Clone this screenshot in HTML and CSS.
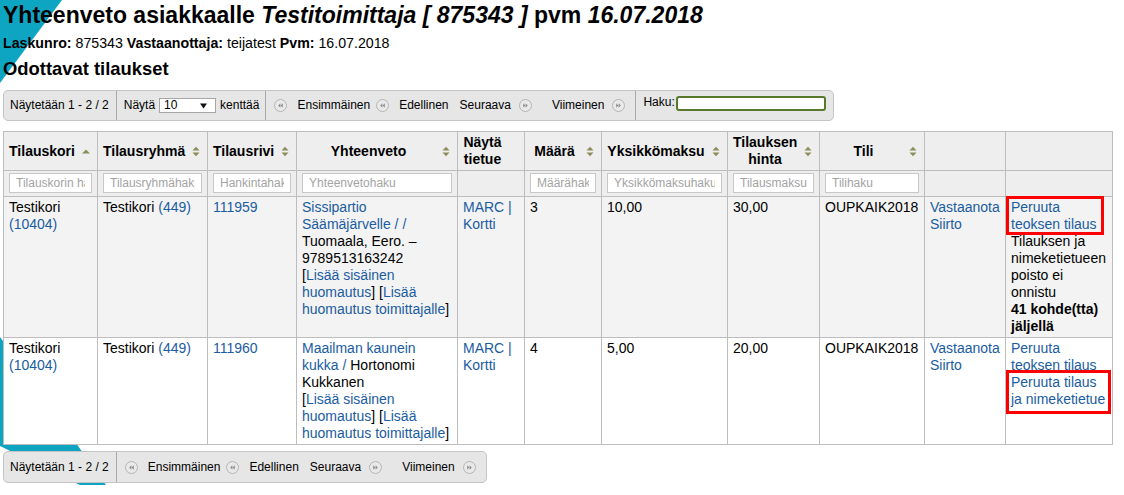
FILE: index.html
```html
<!DOCTYPE html>
<html lang="fi">
<head>
<meta charset="utf-8">
<title>Yhteenveto asiakkaalle Testitoimittaja</title>
<link rel="stylesheet" href="styles.css">
</head>
<body>
<svg class="backdrop" width="1124" height="495" viewBox="0 0 1124 495" aria-hidden="true">
  <polygon points="0,0 62,0 0,83"/>
  <polygon points="0,337 106,485 80,485 0,446"/>
</svg>

<h1>Yhteenveto asiakkaalle <i>Testitoimittaja [ 875343 ]</i> pvm <i>16.07.2018</i></h1>
<p class="meta"><b>Laskunro:</b> 875343 <b>Vastaanottaja:</b> teijatest <b>Pvm:</b> 16.07.2018</p>
<h2>Odottavat tilaukset</h2>

<div class="toolbar">
  <div class="seg info">Näytetään 1 - 2 / 2</div>
  <div class="seg length">
    <span>Näytä</span>
    <span class="sel">
      <select><option>10</option><option>20</option><option>50</option></select>
      <svg class="caret" width="7" height="6" viewBox="0 0 7 6"><path d="M0 0.5H7L3.5 5.5Z"/></svg>
    </span>
    <span>kenttää</span>
  </div>
  <div class="seg pager">
    <span class="pg first"><svg class="pgi" width="13" height="13" viewBox="0 0 13 13"><circle cx="6.5" cy="6.5" r="6"/><path d="M6.4 4.3L4.2 6.5L6.4 8.7Z M8.8 4.3L6.6 6.5L8.8 8.7Z"/></svg><span>Ensimmäinen</span></span>
    <span class="pg prev"><svg class="pgi" width="13" height="13" viewBox="0 0 13 13"><circle cx="6.5" cy="6.5" r="6"/><path d="M6.4 4.3L4.2 6.5L6.4 8.7Z M8.8 4.3L6.6 6.5L8.8 8.7Z"/></svg><span>Edellinen</span></span>
    <span class="pg next"><span>Seuraava</span><svg class="pgi" width="13" height="13" viewBox="0 0 13 13"><circle cx="6.5" cy="6.5" r="6"/><path d="M4.2 4.3L6.4 6.5L4.2 8.7Z M6.6 4.3L8.8 6.5L6.6 8.7Z"/></svg></span>
    <span class="pg last"><span>Viimeinen</span><svg class="pgi" width="13" height="13" viewBox="0 0 13 13"><circle cx="6.5" cy="6.5" r="6"/><path d="M4.2 4.3L6.4 6.5L4.2 8.7Z M6.6 4.3L8.8 6.5L6.6 8.7Z"/></svg></span>
  </div>
  <div class="seg search"><label><span>Haku:</span><input type="text"></label></div>
</div>

<table class="orders">
  <colgroup>
    <col class="c1"><col class="c2"><col class="c3"><col class="c4"><col class="c5"><col class="c6">
    <col class="c7"><col class="c8"><col class="c9"><col class="c10"><col class="c11">
  </colgroup>
  <thead>
    <tr class="heads">
      <th><span>Tilauskori</span><svg class="sort" width="8" height="11" viewBox="0 0 8 11"><path d="M0 7.5L4 3.5L8 7.5Z"/></svg></th>
      <th><span>Tilausryhmä</span><svg class="sort" width="8" height="11" viewBox="0 0 8 11"><path d="M0.5 4.5L4 0.8L7.5 4.5Z M0.5 6.5H7.5L4 10.2Z"/></svg></th>
      <th><span>Tilausrivi</span><svg class="sort" width="8" height="11" viewBox="0 0 8 11"><path d="M0.5 4.5L4 0.8L7.5 4.5Z M0.5 6.5H7.5L4 10.2Z"/></svg></th>
      <th><span>Yhteenveto</span><svg class="sort" width="8" height="11" viewBox="0 0 8 11"><path d="M0.5 4.5L4 0.8L7.5 4.5Z M0.5 6.5H7.5L4 10.2Z"/></svg></th>
      <th><span>Näytä tietue</span></th>
      <th><span>Määrä</span><svg class="sort" width="8" height="11" viewBox="0 0 8 11"><path d="M0.5 4.5L4 0.8L7.5 4.5Z M0.5 6.5H7.5L4 10.2Z"/></svg></th>
      <th><span>Yksikkömaksu</span><svg class="sort" width="8" height="11" viewBox="0 0 8 11"><path d="M0.5 4.5L4 0.8L7.5 4.5Z M0.5 6.5H7.5L4 10.2Z"/></svg></th>
      <th><span>Tilauksen hinta</span><svg class="sort" width="8" height="11" viewBox="0 0 8 11"><path d="M0.5 4.5L4 0.8L7.5 4.5Z M0.5 6.5H7.5L4 10.2Z"/></svg></th>
      <th><span>Tili</span><svg class="sort" width="8" height="11" viewBox="0 0 8 11"><path d="M0.5 4.5L4 0.8L7.5 4.5Z M0.5 6.5H7.5L4 10.2Z"/></svg></th>
      <th></th>
      <th></th>
    </tr>
    <tr class="filters">
      <td><input type="text" placeholder="Tilauskorin haku"></td>
      <td><input type="text" placeholder="Tilausryhmähaku"></td>
      <td><input type="text" placeholder="Hankintahaku"></td>
      <td><input type="text" placeholder="Yhteenvetohaku"></td>
      <td></td>
      <td><input type="text" placeholder="Määrähaku"></td>
      <td><input type="text" placeholder="Yksikkömaksuhaku"></td>
      <td><input type="text" placeholder="Tilausmaksuhaku"></td>
      <td><input type="text" placeholder="Tilihaku"></td>
      <td></td>
      <td></td>
    </tr>
  </thead>
  <tbody>
    <tr class="odd">
      <td>Testikori <a href="#">(10404)</a></td>
      <td>Testikori <a href="#">(449)</a></td>
      <td><a href="#">111959</a></td>
      <td><a href="#">Sissipartio Säämäjärvelle / /</a> Tuomaala, Eero. – 9789513163242<br>[<a href="#">Lisää sisäinen huomautus</a>] [<a href="#">Lisää huomautus toimittajalle</a>]</td>
      <td><a href="#">MARC |</a> <a href="#">Kortti</a></td>
      <td>3</td>
      <td>10,00</td>
      <td>30,00</td>
      <td>OUPKAIK2018</td>
      <td><a href="#">Vastaanota</a><br><a href="#">Siirto</a></td>
      <td>
        <div class="flag f1"><a href="#">Peruuta<br>teoksen tilaus</a></div>
        <div>Tilauksen ja nimeketietueen poisto ei onnistu</div>
        <div><b>41 kohde(tta) jäljellä</b></div>
      </td>
    </tr>
    <tr class="even">
      <td>Testikori <a href="#">(10404)</a></td>
      <td>Testikori <a href="#">(449)</a></td>
      <td><a href="#">111960</a></td>
      <td><a href="#">Maailman kaunein kukka /</a> Hortonomi Kukkanen<br>[<a href="#">Lisää sisäinen huomautus</a>] [<a href="#">Lisää huomautus toimittajalle</a>]</td>
      <td><a href="#">MARC |</a> <a href="#">Kortti</a></td>
      <td>4</td>
      <td>5,00</td>
      <td>20,00</td>
      <td>OUPKAIK2018</td>
      <td><a href="#">Vastaanota</a><br><a href="#">Siirto</a></td>
      <td>
        <a href="#">Peruuta teoksen tilaus</a>
        <div class="flag f2"><a href="#">Peruuta tilaus<br>ja nimeketietue</a></div>
      </td>
    </tr>
  </tbody>
</table>

<div class="toolbar bottom">
  <div class="seg info">Näytetään 1 - 2 / 2</div>
  <div class="seg pager">
    <span class="pg first"><svg class="pgi" width="13" height="13" viewBox="0 0 13 13"><circle cx="6.5" cy="6.5" r="6"/><path d="M6.4 4.3L4.2 6.5L6.4 8.7Z M8.8 4.3L6.6 6.5L8.8 8.7Z"/></svg><span>Ensimmäinen</span></span>
    <span class="pg prev"><svg class="pgi" width="13" height="13" viewBox="0 0 13 13"><circle cx="6.5" cy="6.5" r="6"/><path d="M6.4 4.3L4.2 6.5L6.4 8.7Z M8.8 4.3L6.6 6.5L8.8 8.7Z"/></svg><span>Edellinen</span></span>
    <span class="pg next"><span>Seuraava</span><svg class="pgi" width="13" height="13" viewBox="0 0 13 13"><circle cx="6.5" cy="6.5" r="6"/><path d="M4.2 4.3L6.4 6.5L4.2 8.7Z M6.6 4.3L8.8 6.5L6.6 8.7Z"/></svg></span>
    <span class="pg last"><span>Viimeinen</span><svg class="pgi" width="13" height="13" viewBox="0 0 13 13"><circle cx="6.5" cy="6.5" r="6"/><path d="M4.2 4.3L6.4 6.5L4.2 8.7Z M6.6 4.3L8.8 6.5L6.6 8.7Z"/></svg></span>
  </div>
</div>
</body>
</html>
```

FILE: styles.css
```css
html {
  background: #fff;
}

body {
  margin: 0;
  padding: 1px 3px 0;
  font-family: "Liberation Sans", Arial, sans-serif;
  font-size: 14px;
  line-height: 17px;
  color: #000;
}

a {
  color: #1a5c9f;
  text-decoration: none;
}

.backdrop {
  position: absolute;
  top: 0;
  left: 0;
  z-index: -1;
  fill: #0ea5c3;
}

h1 {
  margin: 0;
  font-size: 23px;
  line-height: 28px;
  font-weight: bold;
}

.meta {
  margin: 6px 0 0;
  font-size: 14.2px;
}

h2 {
  margin: 6px 0 0;
  font-size: 18.4px;
  line-height: 22px;
  font-weight: bold;
}

/* ---------- toolbars ---------- */
.toolbar {
  display: flex;
  width: max-content;
  height: 31px;
  box-sizing: border-box;
  margin-top: 10px;
  background: #e6e6e6;
  border: 1px solid #c4c4c4;
  border-radius: 5px;
  font-size: 12px;
  line-height: 15px;
}

.toolbar.bottom {
  margin-top: 6px;
  height: 32px;
}

.seg {
  display: flex;
  align-items: center;
  border-left: 1px solid #a9a9a9;
}

.seg:first-child {
  border-left: 0;
}

.info {
  padding: 0 7px 0 6px;
}

.length {
  padding: 0 6px 0 7px;
  gap: 4px;
}

.sel {
  position: relative;
  display: block;
}

.sel select {
  -webkit-appearance: none;
  appearance: none;
  display: block;
  width: 57px;
  height: 15px;
  box-sizing: border-box;
  margin: 0;
  padding: 0 0 0 4px;
  border: 1px solid #a6a6a6;
  border-radius: 0;
  background: #fff;
  color: #000;
  font-family: "Liberation Sans", Arial, sans-serif;
  font-size: 12px;
  line-height: 13px;
}

.caret {
  position: absolute;
  right: 9px;
  top: 5px;
  fill: #111;
}

.pager {
  padding: 0 10px 0 8px;
}

.pg {
  display: flex;
  align-items: center;
  gap: 10px;
}

.pg.next,
.pg.last {
  gap: 8px;
}

.pg.prev {
  margin-left: 6px;
}

.pg.next {
  margin-left: 11px;
}

.pg.last {
  margin-left: 20px;
}

.pgi circle {
  fill: #e9e9e9;
  stroke: #b4b4b4;
  stroke-width: 1;
}

.pgi path {
  fill: #8e8e8e;
}

.search {
  align-items: flex-start;
  padding: 5px 7px 0 7px;
}

.search label {
  display: flex;
  align-items: flex-start;
  line-height: 13px;
}

.search input {
  width: 150px;
  height: 15px;
  box-sizing: border-box;
  margin: 0 0 0 1px;
  padding: 0 3px;
  border: 2px solid #58782c;
  border-radius: 3px;
  background: #fff;
  font-size: 12px;
}

/* ---------- table ---------- */
.orders {
  margin-top: 10px;
  border-collapse: collapse;
  table-layout: fixed;
  width: 1109px;
}

.c1 { width: 94px; }
.c2 { width: 110px; }
.c3 { width: 89px; }
.c4 { width: 161px; }
.c5 { width: 67px; }
.c6 { width: 77px; }
.c7 { width: 126px; }
.c8 { width: 92px; }
.c9 { width: 105px; }
.c10 { width: 81px; }
.c11 { width: 107px; }

.orders th,
.orders td {
  border: 1px solid #bdbdbd;
}

.heads th {
  position: relative;
  padding: 2px 22px 2px 5px;
  background: #eeeeee;
  font-weight: bold;
  text-align: center;
  vertical-align: middle;
  line-height: 17px;
}

.sort {
  position: absolute;
  right: 7px;
  top: 50%;
  margin-top: -5px;
  fill: #8d8d5c;
}

.filters td {
  padding: 2px 5px 3px;
  background: #eeeeee;
}

.filters input {
  display: block;
  width: 100%;
  height: 20px;
  box-sizing: border-box;
  margin: 0;
  padding: 0 6px;
  border: 1px solid #c8c8c8;
  background: #fff;
  font-family: "Liberation Sans", Arial, sans-serif;
  font-size: 12px;
}

.filters input::placeholder {
  color: #a3a3a3;
}

tbody td {
  padding: 2px 4px 2px 5px;
  vertical-align: top;
}

tr.odd td {
  background: #f3f3f3;
}

tr.even td {
  background: #ffffff;
}

.flag {
  position: relative;
  width: max-content;
}

.flag::after {
  content: "";
  position: absolute;
  box-sizing: border-box;
  border: 3px solid #ff0000;
}

.f1::after {
  top: -3px;
  bottom: -2px;
  left: -5px;
  right: -7px;
}

.f2::after {
  top: -4px;
  bottom: -6px;
  left: -5px;
  right: -6px;
}
```
